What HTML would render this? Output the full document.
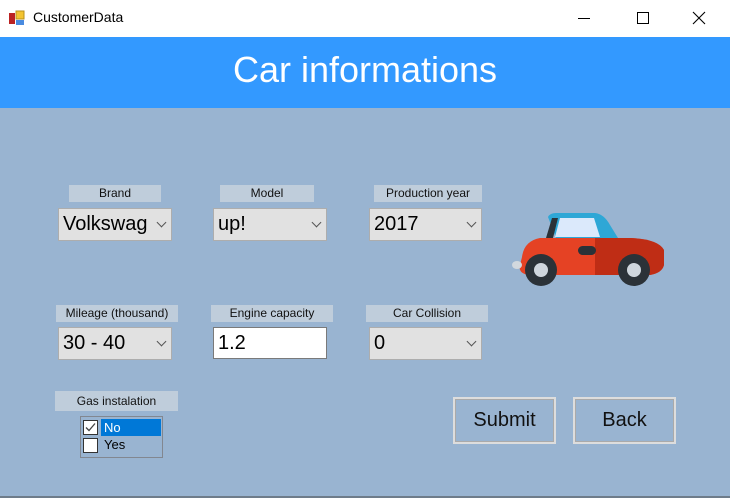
<!DOCTYPE html>
<html><head><meta charset="utf-8"><style>
*{margin:0;padding:0;box-sizing:border-box}
body{width:730px;height:498px;position:relative;overflow:hidden;background:#99b4d1;font-family:"Liberation Sans",sans-serif}
.a{position:absolute}
.tb{left:0;top:0;width:730px;height:37px;background:#fff}
.hd{left:0;top:37px;width:730px;height:71px;background:#3399ff;color:#fff;font-size:36px;text-align:center;line-height:66px}
.lb{background:#bfcddb;font-size:12px;color:#111;text-align:center;line-height:17px;height:17px}
.cb{background:#e1e1e1;border:1px solid #adadad;font-size:20px;color:#000;padding-left:4px;line-height:31px;height:33px}
.cb i{position:absolute;right:6px;top:10px;width:7px;height:7px;border-right:1px solid #555;border-bottom:1px solid #555;transform:rotate(45deg)}
.bt{border:2px solid #ddd;outline:1px solid #aaa;outline-offset:-3px;font-size:20px;text-align:center;line-height:42px;color:#111}
</style></head><body>
<div class="a tb">
<svg class="a" style="left:9px;top:10px" width="16" height="16"><rect x="0" y="3" width="6" height="11" fill="#b22"/><rect x="7" y="1" width="8" height="8" fill="#f3c430" stroke="#b8901a"/><rect x="7" y="10" width="8" height="5" fill="#4a8be0"/></svg>
<div class="a" style="left:33px;top:9px;font-size:14px;color:#000">CustomerData</div>
<div class="a" style="left:578px;top:18px;width:12px;height:1px;background:#000"></div>
<div class="a" style="left:637px;top:12px;width:12px;height:12px;border:1px solid #000"></div>
<svg class="a" style="left:692px;top:11px" width="14" height="14"><path d="M1 1L13 13M13 1L1 13" stroke="#000" stroke-width="1.1"/></svg>
</div>
<div class="a hd">Car informations</div>

<div class="a lb" style="left:69px;top:185px;width:92px">Brand</div>
<div class="a cb" style="left:58px;top:208px;width:114px">Volkswag<i></i></div>
<div class="a lb" style="left:220px;top:185px;width:94px">Model</div>
<div class="a cb" style="left:213px;top:208px;width:114px">up!<i></i></div>
<div class="a lb" style="left:374px;top:185px;width:108px">Production year</div>
<div class="a cb" style="left:369px;top:208px;width:113px">2017<i></i></div>

<div class="a lb" style="left:56px;top:305px;width:122px">Mileage (thousand)</div>
<div class="a cb" style="left:58px;top:327px;width:114px">30 - 40<i></i></div>
<div class="a lb" style="left:211px;top:305px;width:122px">Engine capacity</div>
<div class="a cb" style="left:213px;top:327px;width:114px;height:32px;background:#fff;border-color:#7a7a7a;line-height:30px">1.2</div>
<div class="a lb" style="left:366px;top:305px;width:122px">Car Collision</div>
<div class="a cb" style="left:369px;top:327px;width:113px">0<i></i></div>

<div class="a lb" style="left:55px;top:391px;width:123px;height:20px;line-height:20px">Gas instalation</div>
<div class="a" style="left:80px;top:416px;width:83px;height:42px;border:1px solid #828790;background:#99b4d1"></div>
<div class="a" style="left:101px;top:419px;width:60px;height:17px;background:#0078d7;color:#fff;font-size:13px;line-height:17px;padding-left:3px">No</div>
<div class="a" style="left:83px;top:420px;width:15px;height:15px;border:1px solid #333;background:#fff"></div>
<svg class="a" style="left:84px;top:421px" width="13" height="13"><path d="M2 6.5L5 9.5L11 2.5" stroke="#444" fill="none" stroke-width="1.3"/></svg>
<div class="a" style="left:83px;top:438px;width:15px;height:15px;border:1px solid #333;background:#fff"></div>
<div class="a" style="left:104px;top:437px;font-size:13px;color:#000">Yes</div>

<div class="a bt" style="left:453px;top:397px;width:103px;height:47px">Submit</div>
<div class="a bt" style="left:573px;top:397px;width:103px;height:47px">Back</div>

<svg class="a" style="left:500px;top:205px" width="170" height="90">
<path d="M48 12 Q50 8 56 8 L95 8 Q104 9 110 20 L118 33 L58 33 L56 33 Z" fill="#2ea7d6"/>
<path d="M60 13 L94 13 L100 32 L55 32 Z" fill="#dbe9fb"/>
<path d="M52 13 L58 13 L53 33 L46 33 Z" fill="#2b3238"/>
<path d="M22 52 Q24 36 40 33 L130 33 Q158 34 164 45 L164 60 Q162 68 150 70 L28 70 Q18 68 20 60 Z" fill="#e54224"/>
<path d="M95 33 L130 33 Q158 34 164 45 L164 60 Q162 68 150 70 L95 70 Z" fill="#bf2d15"/>
<rect x="78" y="41" width="18" height="9" rx="4.5" fill="#2b3238"/>
<ellipse cx="17" cy="60" rx="5" ry="4" fill="#d2d8de"/>
<circle cx="41" cy="65" r="16" fill="#2b3238"/><circle cx="41" cy="65" r="7" fill="#cfd6dd"/>
<circle cx="134" cy="65" r="16" fill="#2b3238"/><circle cx="134" cy="65" r="7" fill="#cfd6dd"/>
</svg>
<div class="a" style="left:0;top:496px;width:730px;height:2px;background:#6e7c8a"></div>
</body></html>
